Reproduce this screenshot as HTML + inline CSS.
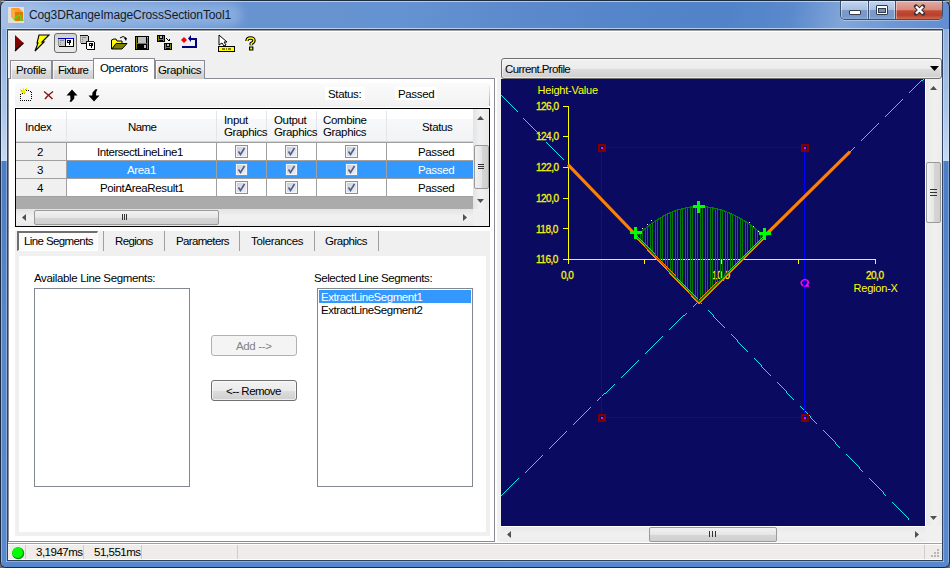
<!DOCTYPE html>
<html><head><meta charset="utf-8">
<style>
*{margin:0;padding:0;box-sizing:border-box}
html,body{width:950px;height:568px;overflow:hidden;background:#6a6a6a}
body{position:relative;font-family:"Liberation Sans",sans-serif;font-size:11px;color:#000}
.a{position:absolute}
.t{position:absolute;white-space:nowrap;line-height:1;font-size:11.5px;letter-spacing:-0.35px}
svg{position:absolute;overflow:visible}
</style></head><body>
<!-- ===== window frame ===== -->
<div class="a" style="left:0;top:0;width:950px;height:568px;border-radius:7px 7px 6px 6px;background:#1d2b3f"></div>
<div class="a" style="left:1px;top:1px;width:948px;height:566px;border-radius:6px 6px 5px 5px;
 background:linear-gradient(100deg,#a9c3e8 0px,#88abdd 50px,#77a0d9 150px,#6893d1 240px,#6592d0 400px,#5b89cc 520px,#5384c9 650px,#5283c8 720px,#5a89cc 780px,#82a6d9 832px,#6f98d4 880px,#5f8bcf 950px)"></div>
<div class="a" style="left:1px;top:1px;width:948px;height:1px;border-radius:6px 6px 0 0;background:rgba(255,255,255,.55)"></div>
<div class="a" style="left:7px;top:28px;width:936px;height:1px;background:rgba(220,235,255,.7)"></div>
<!-- side frames -->
<div class="a" style="left:1px;top:29px;width:6px;height:132px;background:linear-gradient(#8fb1df,#a9c5ea 60%,#c6daf3)"></div>
<div class="a" style="left:943px;top:29px;width:6px;height:132px;background:linear-gradient(#8fb1df,#a9c5ea 60%,#c6daf3)"></div>
<div class="a" style="left:1px;top:161px;width:6px;height:400px;background:linear-gradient(#4c7dc5,#5686cb 40%,#5a88cc)"></div>
<div class="a" style="left:943px;top:161px;width:6px;height:400px;background:linear-gradient(#4c7dc5,#5686cb 40%,#5a88cc)"></div>
<div class="a" style="left:1px;top:561px;width:948px;height:6px;border-radius:0 0 5px 5px;background:linear-gradient(#5c8acd,#5586cb)"></div>
<div class="a" style="left:1px;top:29px;width:1px;height:533px;background:rgba(255,255,255,.35)"></div>
<div class="a" style="left:948px;top:29px;width:1px;height:533px;background:rgba(255,255,255,.3)"></div>
<div class="a" style="left:6px;top:29px;width:1px;height:533px;background:rgba(255,255,255,.3)"></div>
<div class="a" style="left:943px;top:29px;width:1px;height:533px;background:rgba(255,255,255,.3)"></div>
<div class="a" style="left:6px;top:561px;width:938px;height:1px;background:rgba(255,255,255,.3)"></div>
<!-- title glow -->
<div class="a" style="left:22px;top:4px;width:220px;height:22px;border-radius:11px;background:rgba(190,215,245,0.35);filter:blur(4px)"></div>
<!-- title icon -->
<div class="a" style="left:8px;top:7px;width:16px;height:16px;background:#e4e0da"></div>
<svg style="left:8px;top:7px" width="16" height="16" viewBox="0 0 16 16">
  <polygon points="3,1 11,1 15,5 7,5" fill="#ff9a28"/>
  <polygon points="3,1 7,5 7,14 3,10" fill="#ffaa40"/>
  <polygon points="7,5 15,5 15,14 7,14" fill="#e47800"/>
  <polyline points="6,13 10,8.5 13,8.5 13,13 15.5,13" fill="none" stroke="#20f020" stroke-width="1.3"/>
</svg>
<div class="t" style="left:29px;top:9px;font-size:12px;letter-spacing:-0.13px;color:#141a2a">Cog3DRangeImageCrossSectionTool1</div>
<!-- caption buttons -->
<div class="a" style="left:840px;top:1px;width:103px;height:19px;border:1px solid #3b4f70;border-top:none;border-radius:0 0 5px 5px;overflow:hidden;box-shadow:0 1px 0 rgba(255,255,255,.35)">
  <div class="a" style="left:0;top:0;width:28px;height:19px;border-right:1px solid #3b4f70;background:linear-gradient(#c4d5ee 0,#a9c0e2 45%,#7d9bc8 50%,#7898c8 80%,#8fb0dc 100%);box-shadow:inset 0 0 0 1px rgba(255,255,255,0.45)"></div>
  <div class="a" style="left:28px;top:0;width:27px;height:19px;border-right:1px solid #3b4f70;background:linear-gradient(#c4d5ee 0,#a9c0e2 45%,#7d9bc8 50%,#7898c8 80%,#8fb0dc 100%);box-shadow:inset 0 0 0 1px rgba(255,255,255,0.45)"></div>
  <div class="a" style="left:55px;top:0;width:47px;height:19px;background:linear-gradient(#e3aba3 0,#d78b80 45%,#c54a32 52%,#b8402a 75%,#d8765a 100%);box-shadow:inset 0 0 0 1px rgba(255,255,255,0.4)"></div>
</div>
<div class="a" style="left:849px;top:10px;width:12px;height:5px;background:#fff;border:1px solid #333c4c;border-radius:1px"></div>
<div class="a" style="left:876px;top:5px;width:12px;height:10px;border:1px solid #333c4c;border-radius:1px;background:#fff"></div>
<div class="a" style="left:878px;top:8px;width:8px;height:5px;background:#6f8fc0;border:1px solid #333c4c"></div>
<svg style="left:913px;top:4px" width="13" height="12" viewBox="0 0 13 12">
  <path d="M3,2.5 L10,9.5 M10,2.5 L3,9.5" stroke="#3a3030" stroke-width="4.4" stroke-linecap="round"/>
  <path d="M3,2.5 L10,9.5 M10,2.5 L3,9.5" stroke="#fff" stroke-width="2.4" stroke-linecap="butt"/>
</svg>

<!-- ===== client ===== -->
<div class="a" style="left:7px;top:29px;width:936px;height:532px;background:#f0f0f0;border:1px solid #2f4262"></div>
<div class="a" style="left:8px;top:30px;width:934px;height:1px;background:#a0a0a0"></div>
<div class="a" style="left:8px;top:31px;width:934px;height:1px;background:#fff"></div>

<!-- toolbar icons -->
<svg style="left:14px;top:35px" width="11" height="17" viewBox="0 0 11 17">
  <polygon points="1,0 9.5,8 1,16" fill="#800000"/>
  <path d="M9.5,8 L1,16" stroke="#000" stroke-width="1.2"/>
</svg>
<svg style="left:34px;top:35px" width="16" height="17" viewBox="0 0 16 17">
  <polygon points="5,0 15,0 8,7 10,7 1,16 4,8 3,8" fill="#ffff00" stroke="#000" stroke-width="1.1" stroke-linejoin="miter"/>
</svg>
<div class="a" style="left:54px;top:33px;width:23px;height:20px;border:1px solid #6c6c6c;border-radius:3px;background:linear-gradient(#cfcfcf,#dcdcdc 40%,#e4e4e4 70%,#e8e8e8)"></div>
<svg style="left:58px;top:38px" width="16" height="9" viewBox="0 0 16 9" shape-rendering="crispEdges">
  <rect x="0" y="0" width="7" height="1" fill="#0000a8"/>
  <rect x="0" y="1" width="7" height="7" fill="#c8c8c8"/>
  <rect x="0" y="1" width="1" height="7" fill="#909090"/>
  <rect x="2" y="2" width="4" height="1" fill="#8a8a8a"/><rect x="2" y="4" width="1" height="1" fill="#8a8a8a"/><rect x="2" y="6" width="1" height="1" fill="#8a8a8a"/>
  <rect x="7" y="0" width="1" height="9" fill="#000"/>
  <rect x="8" y="0" width="7" height="1" fill="#0000ff"/>
  <rect x="8" y="1" width="7" height="7" fill="#fff"/>
  <rect x="15" y="0" width="1" height="9" fill="#000"/>
  <rect x="1" y="8" width="15" height="1" fill="#000"/>
  <rect x="9" y="2" width="4" height="3" fill="#000"/><rect x="10" y="3" width="1" height="1" fill="#fff"/><rect x="11" y="5" width="1" height="2" fill="#000"/>
</svg>
<svg style="left:80px;top:35px" width="16" height="16" viewBox="0 0 16 16" shape-rendering="crispEdges">
  <rect x="0" y="0" width="8" height="1" fill="#0000a8"/>
  <rect x="0" y="1" width="8" height="7" fill="#c8c8c8"/>
  <rect x="0" y="1" width="1" height="7" fill="#909090"/>
  <rect x="2" y="2" width="4" height="1" fill="#8a8a8a"/><rect x="2" y="4" width="1" height="1" fill="#8a8a8a"/><rect x="2" y="6" width="1" height="1" fill="#8a8a8a"/>
  <rect x="8" y="1" width="1" height="8" fill="#000"/><rect x="1" y="8" width="6" height="1" fill="#000"/>
  <rect x="6" y="6" width="8" height="1" fill="#0000ff"/>
  <rect x="6" y="7" width="8" height="7" fill="#fff"/>
  <rect x="6" y="7" width="1" height="7" fill="#000"/>
  <rect x="14" y="7" width="1" height="8" fill="#000"/><rect x="7" y="14" width="8" height="1" fill="#000"/>
  <rect x="9" y="8" width="4" height="3" fill="#000"/><rect x="10" y="9" width="1" height="1" fill="#fff"/><rect x="11" y="11" width="1" height="2" fill="#000"/>
</svg>
<svg style="left:111px;top:35px" width="17" height="15" viewBox="0 0 17 15">
  <path d="M9,3 Q12,0 15,3" fill="none" stroke="#000" stroke-width="1"/>
  <path d="M13,3 L16,3 L15,6 Z" fill="#000"/>
  <polygon points="0.5,5 3,4 5,4 6,6 11,6 11,9 5,9 1,14 0.5,14" fill="#ffff00" stroke="#000" stroke-width="1"/>
  <polygon points="1,14 5,8.5 16,8.5 11,14" fill="#808000" stroke="#000" stroke-width="1"/>
</svg>
<svg style="left:135px;top:36px" width="15" height="14" viewBox="0 0 15 14" shape-rendering="crispEdges">
  <rect x="0" y="0" width="14" height="14" fill="#000"/>
  <rect x="1" y="1" width="1" height="12" fill="#808000"/><rect x="12" y="1" width="1" height="12" fill="#808000"/>
  <rect x="3" y="1" width="8" height="6" fill="#c0c0c0"/>
  <rect x="1" y="7" width="12" height="1" fill="#808000"/>
  <rect x="9" y="9" width="2" height="3" fill="#c0c0c0"/>
  <rect x="12" y="1" width="1" height="1" fill="#c0c0c0"/>
</svg>
<svg style="left:157px;top:35px" width="17" height="16" viewBox="0 0 17 16" shape-rendering="crispEdges">
  <rect x="0" y="0" width="8" height="7" fill="#000"/>
  <rect x="1" y="1" width="1" height="5" fill="#808000"/><rect x="6" y="1" width="1" height="5" fill="#808000"/><rect x="1" y="4" width="6" height="1" fill="#808000"/>
  <rect x="3" y="1" width="2" height="2" fill="#c0c0c0"/>
  <rect x="7" y="8" width="8" height="7" fill="#000"/>
  <rect x="8" y="9" width="1" height="5" fill="#808000"/><rect x="13" y="9" width="1" height="5" fill="#808000"/><rect x="8" y="12" width="6" height="1" fill="#808000"/>
  <rect x="10" y="9" width="2" height="2" fill="#c0c0c0"/>
  <rect x="9" y="3" width="1" height="1" fill="#000"/><rect x="10" y="4" width="1" height="1" fill="#000"/><rect x="11" y="5" width="2" height="1" fill="#000"/><rect x="12" y="4" width="1" height="1" fill="#000"/>
</svg>
<svg style="left:181px;top:35px" width="18" height="14" viewBox="0 0 18 14">
  <polygon points="3,2 6,5 3,8 0,5" fill="#ff0000"/>
  <polygon points="10,0 10,7 7,3.5" fill="#000080"/>
  <rect x="10" y="3" width="6" height="2" fill="#000080"/>
  <rect x="14" y="3" width="2" height="10" fill="#000080"/>
  <rect x="1" y="11" width="15" height="2" fill="#000080"/>
</svg>
<svg style="left:218px;top:35px" width="19" height="17" viewBox="0 0 19 17">
  <polygon points="1,0 1,10 4,8 6,11 8,10 6,7 9,7" fill="#fff" stroke="#000" stroke-width="1"/>
  <rect x="0.5" y="11.5" width="16" height="5" fill="#ffff00" stroke="#000" stroke-width="1"/>
  <rect x="4" y="13.5" width="3" height="1" fill="#000"/><rect x="8" y="13.5" width="1" height="1" fill="#000"/><rect x="10" y="13.5" width="3" height="1" fill="#000"/>
</svg>
<svg style="left:244px;top:36px" width="13" height="15" viewBox="0 0 13 15">
  <path d="M3,5 Q3,2 6.5,2 Q10,2 10,4.5 Q10,6.2 7.2,7.6 L7.2,9.2" fill="none" stroke="#000" stroke-width="3.4" stroke-linejoin="round"/>
  <path d="M3,5 Q3,2 6.5,2 Q10,2 10,4.5 Q10,6.2 7.2,7.6 L7.2,9.2" fill="none" stroke="#ffff00" stroke-width="1.3"/>
  <rect x="5" y="10.5" width="4.4" height="4" fill="#000"/><rect x="6.2" y="11.5" width="2" height="2" fill="#ffff00"/>
</svg>


<!-- ===== main tabs ===== -->
<div class="a" style="left:8px;top:78px;width:487px;height:464px;background:#fff;border:1px solid #898c95"></div>
<div class="a" style="left:10px;top:60px;width:42px;height:19px;border:1px solid #898c95;border-bottom:none;background:linear-gradient(#f2f2f2 0,#ebebeb 50%,#dddddd 51%,#cfcfcf 100%);box-shadow:inset 1px 1px 0 rgba(255,255,255,.7)"></div>
<div class="a" style="left:52px;top:60px;width:42px;height:19px;border:1px solid #898c95;border-bottom:none;background:linear-gradient(#f2f2f2 0,#ebebeb 50%,#dddddd 51%,#cfcfcf 100%);box-shadow:inset 1px 1px 0 rgba(255,255,255,.7)"></div>
<div class="a" style="left:155px;top:60px;width:50px;height:19px;border:1px solid #898c95;border-bottom:none;background:linear-gradient(#f2f2f2 0,#ebebeb 50%,#dddddd 51%,#cfcfcf 100%);box-shadow:inset 1px 1px 0 rgba(255,255,255,.7)"></div>
<div class="a" style="left:93px;top:58px;width:62px;height:21px;border:1px solid #898c95;border-bottom:none;background:#fff"></div>
<div class="t" style="left:16px;top:65px">Profile</div>
<div class="t" style="left:58px;top:65px;letter-spacing:-0.7px">Fixture</div>
<div class="t" style="left:100px;top:63px">Operators</div>
<div class="t" style="left:158px;top:65px">Graphics</div>


<!-- ===== left tab page ===== -->
<svg style="left:0;top:0" width="0" height="0"><defs><linearGradient id="cg" x1="0" y1="0" x2="1" y2="1"><stop offset="0" stop-color="#cbcfd5"/><stop offset="1" stop-color="#f0f0f0"/></linearGradient></defs></svg>
<!-- grid toolbar panel -->
<div class="a" style="left:15px;top:83px;width:475px;height:24px;border-radius:2px;background:linear-gradient(#fbfbfb,#f1f1f1)"></div>
<div class="a" style="left:489px;top:85px;width:1px;height:21px;background:linear-gradient(#f0f0f0,#a8a8a8)"></div>
<svg style="left:19px;top:87px" width="15" height="15" viewBox="0 0 15 15" shape-rendering="crispEdges">
  <g fill="#000">
  <rect x="1" y="13" width="1" height="1"/><rect x="3" y="13" width="1" height="1"/><rect x="5" y="13" width="1" height="1"/><rect x="7" y="13" width="1" height="1"/><rect x="9" y="13" width="1" height="1"/><rect x="11" y="13" width="1" height="1"/>
  <rect x="12" y="5" width="1" height="1"/><rect x="12" y="7" width="1" height="1"/><rect x="12" y="9" width="1" height="1"/><rect x="12" y="11" width="1" height="1"/>
  <rect x="1" y="7" width="1" height="1"/><rect x="1" y="9" width="1" height="1"/><rect x="1" y="11" width="1" height="1"/>
  <rect x="7" y="3" width="1" height="1"/><rect x="9" y="3" width="1" height="1"/><rect x="11" y="4" width="1" height="1"/>
  <rect x="3" y="6" width="1" height="1"/><rect x="6" y="2" width="1" height="1"/></g>
  <g fill="#f0f000"><rect x="3" y="3" width="3" height="3"/><rect x="1" y="2" width="1" height="1"/><rect x="7" y="1" width="1" height="1"/><rect x="2" y="6" width="1" height="1"/><rect x="6" y="5" width="1" height="1"/><rect x="4" y="1" width="1" height="2"/><rect x="1" y="4" width="2" height="1"/></g>
  <g fill="#a0a070"><rect x="2" y="3" width="1" height="1"/><rect x="6" y="2" width="1" height="1"/><rect x="5" y="6" width="1" height="1"/></g>
</svg>
<svg style="left:43px;top:90px" width="11" height="10" viewBox="0 0 11 10">
  <path d="M1,1.5 Q5,4.5 9.5,9 M10,1.5 Q5,5 2,9" fill="none" stroke="#8c1414" stroke-width="1.5"/>
</svg>
<svg style="left:66px;top:89px" width="13" height="13" viewBox="0 0 13 13">
  <polygon points="0.5,6.5 6,0.5 11.5,6.5 8.3,6.5 8.3,9.5 5.5,12.8 3.5,12.8 4.5,10.5 4.2,6.5" fill="#000"/>
</svg>
<svg style="left:88px;top:89px" width="13" height="13" viewBox="0 0 13 13">
  <polygon points="0.5,6.5 6,12.5 11.5,6.5 8,6.5 8.2,3 9.5,0.3 7.5,0.3 4.5,3.5 4.2,6.5" fill="#000"/>
</svg>
<div class="a" style="left:325px;top:87px;width:40px;height:13px;background:#fff"></div>
<div class="t" style="left:328px;top:89px">Status:</div>
<div class="a" style="left:395px;top:87px;width:42px;height:13px;background:#fff"></div>
<div class="t" style="left:398px;top:89px">Passed</div>

<!-- data grid -->
<div class="a" style="left:15px;top:108px;width:475px;height:119px;border:1px solid #000;background:#ababab"></div>
<!-- header -->
<div class="a" style="left:16px;top:109px;width:457px;height:32px;background:linear-gradient(#fff 0,#fff 30%,#f7f8fa 31%,#f2f3f5 100%)"></div>
<div class="a" style="left:16px;top:141px;width:457px;height:1px;background:#d5d5d5"></div>
<div class="a" style="left:16px;top:142px;width:457px;height:1px;background:#a0a0a0"></div>
<div class="a" style="left:66px;top:111px;width:1px;height:30px;background:#e4e5e8"></div>
<div class="a" style="left:216px;top:111px;width:1px;height:30px;background:#e4e5e8"></div>
<div class="a" style="left:266px;top:111px;width:1px;height:30px;background:#e4e5e8"></div>
<div class="a" style="left:316px;top:111px;width:1px;height:30px;background:#e4e5e8"></div>
<div class="a" style="left:386px;top:111px;width:1px;height:30px;background:#e4e5e8"></div>
<div class="t" style="left:25px;top:122px">Index</div>
<div class="t" style="left:128px;top:122px;letter-spacing:-0.6px">Name</div>
<div class="t" style="left:224px;top:115px">Input</div>
<div class="t" style="left:224px;top:127px">Graphics</div>
<div class="t" style="left:274px;top:115px">Output</div>
<div class="t" style="left:274px;top:127px">Graphics</div>
<div class="t" style="left:323px;top:115px">Combine</div>
<div class="t" style="left:323px;top:127px">Graphics</div>
<div class="t" style="left:422px;top:122px">Status</div>
<!-- rows -->
<div class="a" style="left:16px;top:143px;width:457px;height:54px;background:#fff"></div>
<div class="a" style="left:16px;top:143px;width:50px;height:54px;background:#f0f0f0"></div>
<div class="a" style="left:67px;top:161px;width:406px;height:17px;background:#3399ff"></div>
<div class="a" style="left:16px;top:160px;width:457px;height:1px;background:#a0a0a0"></div>
<div class="a" style="left:16px;top:178px;width:457px;height:1px;background:#a0a0a0"></div>
<div class="a" style="left:16px;top:196px;width:457px;height:1px;background:#a0a0a0"></div>
<div class="a" style="left:66px;top:143px;width:1px;height:54px;background:#a0a0a0"></div>
<div class="a" style="left:216px;top:143px;width:1px;height:54px;background:#a0a0a0"></div>
<div class="a" style="left:266px;top:143px;width:1px;height:54px;background:#a0a0a0"></div>
<div class="a" style="left:316px;top:143px;width:1px;height:54px;background:#a0a0a0"></div>
<div class="a" style="left:386px;top:143px;width:1px;height:54px;background:#a0a0a0"></div>
<div class="t" style="left:37px;top:147px">2</div>
<div class="t" style="left:37px;top:165px">3</div>
<div class="t" style="left:37px;top:183px">4</div>
<div class="t" style="left:97px;top:147px;letter-spacing:-0.45px">IntersectLineLine1</div>
<div class="t" style="left:127px;top:165px;color:#fff">Area1</div>
<div class="t" style="left:100px;top:183px">PointAreaResult1</div>
<div class="t" style="left:418px;top:147px">Passed</div>
<div class="t" style="left:418px;top:165px;color:#fff">Passed</div>
<div class="t" style="left:418px;top:183px">Passed</div>
<svg style="left:235px;top:145px" width="13" height="13" viewBox="0 0 13 13"><rect x="0.5" y="0.5" width="12" height="12" fill="#f4f4f4" stroke="#8f8f8f"/><rect x="2" y="2" width="9" height="9" fill="url(#cg)"/><path d="M3.5,6.5 L5.5,9.5 L9.5,3" fill="none" stroke="#4a5f97" stroke-width="1.6"/></svg><svg style="left:285px;top:145px" width="13" height="13" viewBox="0 0 13 13"><rect x="0.5" y="0.5" width="12" height="12" fill="#f4f4f4" stroke="#8f8f8f"/><rect x="2" y="2" width="9" height="9" fill="url(#cg)"/><path d="M3.5,6.5 L5.5,9.5 L9.5,3" fill="none" stroke="#4a5f97" stroke-width="1.6"/></svg><svg style="left:345px;top:145px" width="13" height="13" viewBox="0 0 13 13"><rect x="0.5" y="0.5" width="12" height="12" fill="#f4f4f4" stroke="#8f8f8f"/><rect x="2" y="2" width="9" height="9" fill="url(#cg)"/><path d="M3.5,6.5 L5.5,9.5 L9.5,3" fill="none" stroke="#4a5f97" stroke-width="1.6"/></svg><svg style="left:235px;top:163px" width="13" height="13" viewBox="0 0 13 13"><rect x="0.5" y="0.5" width="12" height="12" fill="#f4f4f4" stroke="#8f8f8f"/><rect x="2" y="2" width="9" height="9" fill="url(#cg)"/><path d="M3.5,6.5 L5.5,9.5 L9.5,3" fill="none" stroke="#4a5f97" stroke-width="1.6"/></svg><svg style="left:285px;top:163px" width="13" height="13" viewBox="0 0 13 13"><rect x="0.5" y="0.5" width="12" height="12" fill="#f4f4f4" stroke="#8f8f8f"/><rect x="2" y="2" width="9" height="9" fill="url(#cg)"/><path d="M3.5,6.5 L5.5,9.5 L9.5,3" fill="none" stroke="#4a5f97" stroke-width="1.6"/></svg><svg style="left:345px;top:163px" width="13" height="13" viewBox="0 0 13 13"><rect x="0.5" y="0.5" width="12" height="12" fill="#f4f4f4" stroke="#8f8f8f"/><rect x="2" y="2" width="9" height="9" fill="url(#cg)"/><path d="M3.5,6.5 L5.5,9.5 L9.5,3" fill="none" stroke="#4a5f97" stroke-width="1.6"/></svg><svg style="left:235px;top:181px" width="13" height="13" viewBox="0 0 13 13"><rect x="0.5" y="0.5" width="12" height="12" fill="#f4f4f4" stroke="#8f8f8f"/><rect x="2" y="2" width="9" height="9" fill="url(#cg)"/><path d="M3.5,6.5 L5.5,9.5 L9.5,3" fill="none" stroke="#4a5f97" stroke-width="1.6"/></svg><svg style="left:285px;top:181px" width="13" height="13" viewBox="0 0 13 13"><rect x="0.5" y="0.5" width="12" height="12" fill="#f4f4f4" stroke="#8f8f8f"/><rect x="2" y="2" width="9" height="9" fill="url(#cg)"/><path d="M3.5,6.5 L5.5,9.5 L9.5,3" fill="none" stroke="#4a5f97" stroke-width="1.6"/></svg><svg style="left:345px;top:181px" width="13" height="13" viewBox="0 0 13 13"><rect x="0.5" y="0.5" width="12" height="12" fill="#f4f4f4" stroke="#8f8f8f"/><rect x="2" y="2" width="9" height="9" fill="url(#cg)"/><path d="M3.5,6.5 L5.5,9.5 L9.5,3" fill="none" stroke="#4a5f97" stroke-width="1.6"/></svg>
<!-- grid v-scrollbar -->
<div class="a" style="left:473px;top:109px;width:16px;height:100px;background:linear-gradient(90deg,#e3e3e3,#f0f0f0 40%,#f0f0f0 60%,#e8e8e8)"></div>
<svg style="left:477px;top:116px" width="7" height="4" viewBox="0 0 7 4"><polygon points="0,4 3.5,0 7,4" fill="#505050"/></svg>
<svg style="left:477px;top:199px" width="7" height="4" viewBox="0 0 7 4"><polygon points="0,0 3.5,4 7,0" fill="#505050"/></svg>
<div class="a" style="left:474px;top:145px;width:15px;height:44px;border:1px solid #9a9a9a;border-radius:2px;background:linear-gradient(90deg,#f2f2f2,#e6e6e6 50%,#d6d6d6 51%,#cfcfcf)"></div>
<div class="a" style="left:478px;top:164px;width:6px;height:1px;background:#333"></div>
<div class="a" style="left:478px;top:166px;width:6px;height:1px;background:#333"></div>
<div class="a" style="left:478px;top:168px;width:6px;height:1px;background:#333"></div>
<!-- grid h-scrollbar -->
<div class="a" style="left:16px;top:209px;width:457px;height:17px;background:linear-gradient(#e3e3e3,#f0f0f0 40%,#f0f0f0 60%,#e8e8e8)"></div>
<svg style="left:22px;top:214px" width="4" height="7" viewBox="0 0 4 7"><polygon points="4,0 0,3.5 4,7" fill="#505050"/></svg>
<svg style="left:463px;top:214px" width="4" height="7" viewBox="0 0 4 7"><polygon points="0,0 4,3.5 0,7" fill="#505050"/></svg>
<div class="a" style="left:34px;top:210px;width:185px;height:15px;border:1px solid #9a9a9a;border-radius:2px;background:linear-gradient(#f2f2f2,#e6e6e6 50%,#d6d6d6 51%,#cfcfcf)"></div>
<div class="a" style="left:122px;top:214px;width:1px;height:6px;background:#333"></div>
<div class="a" style="left:124px;top:214px;width:1px;height:6px;background:#333"></div>
<div class="a" style="left:126px;top:214px;width:1px;height:6px;background:#333"></div>
<div class="a" style="left:473px;top:209px;width:16px;height:17px;background:#f0f0f0"></div>

<!-- inner tab control -->
<div class="a" style="left:15px;top:231px;width:475px;height:305px;background:#f0f0f0"></div>
<div class="a" style="left:19px;top:256px;width:467px;height:276px;background:#fff"></div>
<div class="a" style="left:17px;top:231px;width:81px;height:20px;border-top:2px solid #6f6f6f;border-left:2px solid #6f6f6f;border-right:1px solid #fff;border-bottom:1px solid #fff;background:#fbfbfb"></div>
<div class="a" style="left:103px;top:231px;width:1px;height:20px;background:#a0a0a0"></div>
<div class="a" style="left:164px;top:231px;width:1px;height:20px;background:#a0a0a0"></div>
<div class="a" style="left:239px;top:231px;width:1px;height:20px;background:#a0a0a0"></div>
<div class="a" style="left:314px;top:231px;width:1px;height:20px;background:#a0a0a0"></div>
<div class="a" style="left:378px;top:231px;width:1px;height:20px;background:#a0a0a0"></div>
<div class="t" style="left:24px;top:236px;letter-spacing:-0.6px">Line Segments</div>
<div class="t" style="left:115px;top:236px;letter-spacing:-0.65px">Regions</div>
<div class="t" style="left:176px;top:236px;letter-spacing:-0.65px">Parameters</div>
<div class="t" style="left:251px;top:236px">Tolerances</div>
<div class="t" style="left:325px;top:236px;letter-spacing:-0.5px">Graphics</div>
<div class="t" style="left:34px;top:273px">Available Line Segments:</div>
<div class="t" style="left:314px;top:273px;letter-spacing:-0.42px">Selected Line Segments:</div>
<div class="a" style="left:34px;top:288px;width:156px;height:199px;border:1px solid #828790;background:#fff"></div>
<div class="a" style="left:317px;top:288px;width:156px;height:199px;border:1px solid #828790;background:#fff"></div>
<div class="a" style="left:319px;top:290px;width:152px;height:13px;background:#3399ff"></div>
<div class="t" style="left:321px;top:292px;color:#fff;letter-spacing:-0.45px">ExtractLineSegment1</div>
<div class="t" style="left:321px;top:305px;letter-spacing:-0.45px">ExtractLineSegment2</div>
<div class="a" style="left:211px;top:335px;width:86px;height:21px;border:1px solid #adb2b5;border-radius:3px;background:#f4f4f4"></div>
<div class="t" style="left:236px;top:341px;color:#838383">Add --&gt;</div>
<div class="a" style="left:211px;top:380px;width:86px;height:21px;border:1px solid #707070;border-radius:3px;background:linear-gradient(#f2f2f2 0,#ebebeb 50%,#dddddd 51%,#cfcfcf 100%);box-shadow:inset 0 0 0 1px rgba(255,255,255,.6)"></div>
<div class="t" style="left:226px;top:386px;letter-spacing:-0.55px">&lt;-- Remove</div>


<!-- ===== right pane ===== -->
<div class="a" style="left:495px;top:78px;width:2px;height:464px;background:#fff"></div>
<!-- dropdown -->
<div class="a" style="left:501px;top:58px;width:441px;height:21px;border:1px solid #707070;border-radius:3px;background:linear-gradient(#f2f2f2 0,#ebebeb 50%,#dddddd 51%,#cfcfcf 100%);box-shadow:inset 0 0 0 1px rgba(255,255,255,.55)"></div>
<div class="t" style="left:505px;top:64px;letter-spacing:-0.6px">Current.Profile</div>
<svg style="left:930px;top:66px" width="9" height="5" viewBox="0 0 9 5"><polygon points="0,0 9,0 4.5,5" fill="#000"/></svg>
<!-- plot -->
<svg style="left:501px;top:79px;overflow:hidden" width="424" height="447" viewBox="501 79 424 447">
  <rect x="501" y="79" width="424" height="447" fill="#0a0a60"/>
  <path d="M501 95h1v1h-1zM502 96h1v1h-1zM503 97h1v1h-1zM504 98h1v1h-1zM505 99h1v1h-1zM506 100h1v1h-1zM507 101h1v1h-1zM508 102h1v1h-1zM509 103h1v1h-1zM510 104h1v1h-1zM511 105h1v1h-1zM512 106h1v1h-1zM513 107h1v1h-1zM514 108h1v1h-1zM515 109h1v1h-1zM516 110h1v1h-1zM517 111h1v1h-1zM523 118h1v1h-1zM524 119h1v1h-1zM525 120h1v1h-1zM526 121h1v1h-1zM527 122h1v1h-1zM528 123h1v1h-1zM529 124h1v1h-1zM530 125h1v1h-1zM531 126h1v1h-1zM532 127h1v1h-1zM533 128h1v1h-1zM534 129h1v1h-1zM535 130h1v1h-1zM536 131h1v1h-1zM537 132h1v1h-1zM538 133h1v1h-1zM539 134h1v1h-1zM540 135h1v1h-1zM546 142h1v1h-1zM547 143h1v1h-1zM548 144h1v1h-1zM549 145h1v1h-1zM550 146h1v1h-1zM551 147h1v1h-1zM552 148h1v1h-1zM553 149h1v1h-1zM554 150h1v1h-1zM555 151h1v1h-1zM556 152h1v1h-1zM557 153h1v1h-1zM558 154h1v1h-1zM559 155h1v1h-1zM560 156h1v1h-1zM561 157h1v1h-1zM562 158h1v1h-1zM563 159h1v1h-1zM569 166h1v1h-1zM570 167h1v1h-1zM571 168h1v1h-1zM572 169h1v1h-1zM573 170h1v1h-1zM574 171h1v1h-1zM575 172h1v1h-1zM576 173h1v1h-1zM577 174h1v1h-1zM578 175h1v1h-1zM579 176h1v1h-1zM580 177h1v1h-1zM581 178h1v1h-1zM582 179h1v1h-1zM583 180h1v1h-1zM584 181h1v1h-1zM585 182h1v1h-1zM586 183h1v1h-1zM592 190h1v1h-1zM593 191h1v1h-1zM594 192h1v1h-1zM595 193h1v1h-1zM596 194h1v1h-1zM597 195h1v1h-1zM598 196h1v1h-1zM599 197h1v1h-1zM600 198h1v1h-1zM601 199h1v1h-1zM602 200h1v1h-1zM603 201h1v1h-1zM604 202h1v1h-1zM605 203h1v1h-1zM606 204h1v1h-1zM607 205h1v1h-1zM608 206h1v1h-1zM609 207h1v1h-1zM615 214h1v1h-1zM616 215h1v1h-1zM617 216h1v1h-1zM618 217h1v1h-1zM619 218h1v1h-1zM620 219h1v1h-1zM621 220h1v1h-1zM622 221h1v1h-1zM623 222h1v1h-1zM624 223h1v1h-1zM625 224h1v1h-1zM626 225h1v1h-1zM627 226h1v1h-1zM628 227h1v1h-1zM629 228h1v1h-1zM630 229h1v1h-1zM631 230h1v1h-1zM632 231h1v1h-1zM639 238h1v1h-1zM640 239h1v1h-1zM640 240h1v1h-1zM641 241h1v1h-1zM642 242h1v1h-1zM643 243h1v1h-1zM644 244h1v1h-1zM645 245h1v1h-1zM646 246h1v1h-1zM647 247h1v1h-1zM648 248h1v1h-1zM649 249h1v1h-1zM650 250h1v1h-1zM651 251h1v1h-1zM652 252h1v1h-1zM653 253h1v1h-1zM654 254h1v1h-1zM655 255h1v1h-1zM662 262h1v1h-1zM663 263h1v1h-1zM664 264h1v1h-1zM664 265h1v1h-1zM665 266h1v1h-1zM666 267h1v1h-1zM667 268h1v1h-1zM668 269h1v1h-1zM669 270h1v1h-1zM670 271h1v1h-1zM671 272h1v1h-1zM672 273h1v1h-1zM673 274h1v1h-1zM674 275h1v1h-1zM675 276h1v1h-1zM676 277h1v1h-1zM677 278h1v1h-1zM678 279h1v1h-1zM685 286h1v1h-1zM686 287h1v1h-1zM687 288h1v1h-1zM688 289h1v1h-1zM688 290h1v1h-1zM689 291h1v1h-1zM690 292h1v1h-1zM691 293h1v1h-1zM692 294h1v1h-1zM693 295h1v1h-1zM694 296h1v1h-1zM695 297h1v1h-1zM696 298h1v1h-1zM697 299h1v1h-1zM698 300h1v1h-1zM699 301h1v1h-1zM700 302h1v1h-1zM701 303h1v1h-1zM708 310h1v1h-1zM709 311h1v1h-1zM710 312h1v1h-1zM711 313h1v1h-1zM712 314h1v1h-1zM713 315h1v1h-1zM713 316h1v1h-1zM714 317h1v1h-1zM715 318h1v1h-1zM716 319h1v1h-1zM717 320h1v1h-1zM718 321h1v1h-1zM719 322h1v1h-1zM720 323h1v1h-1zM721 324h1v1h-1zM722 325h1v1h-1zM723 326h1v1h-1zM724 327h1v1h-1zM731 334h1v1h-1zM732 335h1v1h-1zM733 336h1v1h-1zM734 337h1v1h-1zM735 338h1v1h-1zM736 339h1v1h-1zM737 340h1v1h-1zM737 341h1v1h-1zM738 342h1v1h-1zM739 343h1v1h-1zM740 344h1v1h-1zM741 345h1v1h-1zM742 346h1v1h-1zM743 347h1v1h-1zM744 348h1v1h-1zM745 349h1v1h-1zM746 350h1v1h-1zM747 351h1v1h-1zM754 358h1v1h-1zM755 359h1v1h-1zM756 360h1v1h-1zM757 361h1v1h-1zM758 362h1v1h-1zM759 363h1v1h-1zM760 364h1v1h-1zM761 365h1v1h-1zM761 366h1v1h-1zM762 367h1v1h-1zM763 368h1v1h-1zM764 369h1v1h-1zM765 370h1v1h-1zM766 371h1v1h-1zM767 372h1v1h-1zM768 373h1v1h-1zM769 374h1v1h-1zM770 375h1v1h-1zM777 382h1v1h-1zM778 383h1v1h-1zM779 384h1v1h-1zM780 385h1v1h-1zM781 386h1v1h-1zM782 387h1v1h-1zM783 388h1v1h-1zM784 389h1v1h-1zM785 390h1v1h-1zM786 391h1v1h-1zM786 392h1v1h-1zM787 393h1v1h-1zM788 394h1v1h-1zM789 395h1v1h-1zM790 396h1v1h-1zM791 397h1v1h-1zM792 398h1v1h-1zM793 399h1v1h-1zM800 406h1v1h-1zM801 407h1v1h-1zM802 408h1v1h-1zM803 409h1v1h-1zM804 410h1v1h-1zM805 411h1v1h-1zM806 412h1v1h-1zM807 413h1v1h-1zM808 414h1v1h-1zM809 415h1v1h-1zM810 416h1v1h-1zM810 417h1v1h-1zM811 418h1v1h-1zM812 419h1v1h-1zM813 420h1v1h-1zM814 421h1v1h-1zM815 422h1v1h-1zM816 423h1v1h-1zM823 430h1v1h-1zM824 431h1v1h-1zM825 432h1v1h-1zM826 433h1v1h-1zM827 434h1v1h-1zM828 435h1v1h-1zM829 436h1v1h-1zM830 437h1v1h-1zM831 438h1v1h-1zM832 439h1v1h-1zM833 440h1v1h-1zM834 441h1v1h-1zM835 442h1v1h-1zM835 443h1v1h-1zM836 444h1v1h-1zM837 445h1v1h-1zM838 446h1v1h-1zM839 447h1v1h-1zM846 454h1v1h-1zM847 455h1v1h-1zM848 456h1v1h-1zM849 457h1v1h-1zM850 458h1v1h-1zM851 459h1v1h-1zM852 460h1v1h-1zM853 461h1v1h-1zM854 462h1v1h-1zM855 463h1v1h-1zM856 464h1v1h-1zM857 465h1v1h-1zM858 466h1v1h-1zM859 467h1v1h-1zM859 468h1v1h-1zM860 469h1v1h-1zM861 470h1v1h-1zM862 471h1v1h-1zM869 478h1v1h-1zM870 479h1v1h-1zM871 480h1v1h-1zM872 481h1v1h-1zM873 482h1v1h-1zM874 483h1v1h-1zM875 484h1v1h-1zM876 485h1v1h-1zM877 486h1v1h-1zM878 487h1v1h-1zM879 488h1v1h-1zM880 489h1v1h-1zM881 490h1v1h-1zM882 491h1v1h-1zM883 492h1v1h-1zM883 493h1v1h-1zM884 494h1v1h-1zM885 495h1v1h-1zM892 502h1v1h-1zM893 503h1v1h-1zM894 504h1v1h-1zM895 505h1v1h-1zM896 506h1v1h-1zM897 507h1v1h-1zM898 508h1v1h-1zM899 509h1v1h-1zM900 510h1v1h-1zM901 511h1v1h-1zM902 512h1v1h-1zM903 513h1v1h-1zM904 514h1v1h-1zM905 515h1v1h-1zM906 516h1v1h-1zM907 517h1v1h-1zM908 518h1v1h-1zM908 519h1v1h-1zM501 495h1v1h-1zM502 494h1v1h-1zM503 493h1v1h-1zM504 492h1v1h-1zM505 491h1v1h-1zM506 490h1v1h-1zM507 489h1v1h-1zM508 488h1v1h-1zM509 487h1v1h-1zM510 486h1v1h-1zM511 485h1v1h-1zM512 484h1v1h-1zM513 483h1v1h-1zM514 482h1v1h-1zM515 481h1v1h-1zM516 480h1v1h-1zM517 479h1v1h-1zM518 478h1v1h-1zM525 472h1v1h-1zM526 471h1v1h-1zM527 470h1v1h-1zM528 469h1v1h-1zM529 468h1v1h-1zM530 467h1v1h-1zM531 466h1v1h-1zM532 465h1v1h-1zM533 464h1v1h-1zM534 463h1v1h-1zM535 462h1v1h-1zM536 461h1v1h-1zM537 460h1v1h-1zM538 459h1v1h-1zM539 458h1v1h-1zM540 457h1v1h-1zM541 456h1v1h-1zM542 455h1v1h-1zM549 448h1v1h-1zM550 447h1v1h-1zM551 446h1v1h-1zM552 445h1v1h-1zM553 444h1v1h-1zM554 443h1v1h-1zM555 442h1v1h-1zM556 441h1v1h-1zM557 440h1v1h-1zM558 439h1v1h-1zM559 438h1v1h-1zM560 437h1v1h-1zM561 436h1v1h-1zM562 435h1v1h-1zM563 434h1v1h-1zM564 433h1v1h-1zM565 432h1v1h-1zM566 431h1v1h-1zM573 424h1v1h-1zM574 423h1v1h-1zM575 422h1v1h-1zM576 421h1v1h-1zM577 420h1v1h-1zM578 419h1v1h-1zM579 418h1v1h-1zM580 417h1v1h-1zM581 416h1v1h-1zM582 415h1v1h-1zM583 414h1v1h-1zM584 413h1v1h-1zM585 412h1v1h-1zM586 411h1v1h-1zM587 410h1v1h-1zM588 409h1v1h-1zM589 408h1v1h-1zM590 407h1v1h-1zM597 400h1v1h-1zM598 399h1v1h-1zM599 398h1v1h-1zM600 397h1v1h-1zM601 396h1v1h-1zM602 395h1v1h-1zM603 394h1v1h-1zM604 393h1v1h-1zM605 393h1v1h-1zM606 392h1v1h-1zM607 391h1v1h-1zM608 390h1v1h-1zM609 389h1v1h-1zM610 388h1v1h-1zM611 387h1v1h-1zM612 386h1v1h-1zM613 385h1v1h-1zM614 384h1v1h-1zM621 377h1v1h-1zM622 376h1v1h-1zM623 375h1v1h-1zM624 374h1v1h-1zM625 373h1v1h-1zM626 372h1v1h-1zM627 371h1v1h-1zM628 370h1v1h-1zM629 369h1v1h-1zM630 368h1v1h-1zM631 367h1v1h-1zM632 366h1v1h-1zM633 365h1v1h-1zM634 364h1v1h-1zM635 363h1v1h-1zM636 362h1v1h-1zM637 361h1v1h-1zM638 360h1v1h-1zM645 353h1v1h-1zM646 352h1v1h-1zM647 351h1v1h-1zM648 350h1v1h-1zM649 349h1v1h-1zM650 348h1v1h-1zM651 347h1v1h-1zM652 346h1v1h-1zM653 345h1v1h-1zM654 344h1v1h-1zM655 343h1v1h-1zM656 342h1v1h-1zM657 341h1v1h-1zM658 340h1v1h-1zM659 339h1v1h-1zM660 338h1v1h-1zM661 337h1v1h-1zM662 336h1v1h-1zM669 329h1v1h-1zM670 328h1v1h-1zM671 327h1v1h-1zM672 326h1v1h-1zM673 325h1v1h-1zM674 324h1v1h-1zM675 323h1v1h-1zM676 322h1v1h-1zM677 321h1v1h-1zM678 320h1v1h-1zM679 319h1v1h-1zM680 318h1v1h-1zM681 317h1v1h-1zM682 316h1v1h-1zM683 315h1v1h-1zM684 315h1v1h-1zM685 314h1v1h-1zM686 313h1v1h-1zM693 306h1v1h-1zM694 305h1v1h-1zM695 304h1v1h-1zM696 303h1v1h-1zM697 302h1v1h-1zM698 301h1v1h-1zM699 300h1v1h-1zM700 299h1v1h-1zM701 298h1v1h-1zM702 297h1v1h-1zM703 296h1v1h-1zM704 295h1v1h-1zM705 294h1v1h-1zM706 293h1v1h-1zM707 292h1v1h-1zM708 291h1v1h-1zM709 290h1v1h-1zM710 289h1v1h-1zM717 282h1v1h-1zM718 281h1v1h-1zM719 280h1v1h-1zM720 279h1v1h-1zM721 278h1v1h-1zM722 277h1v1h-1zM723 276h1v1h-1zM724 275h1v1h-1zM725 274h1v1h-1zM726 273h1v1h-1zM727 272h1v1h-1zM728 271h1v1h-1zM729 270h1v1h-1zM730 269h1v1h-1zM731 268h1v1h-1zM732 267h1v1h-1zM733 266h1v1h-1zM734 265h1v1h-1zM741 258h1v1h-1zM742 257h1v1h-1zM743 256h1v1h-1zM744 255h1v1h-1zM745 254h1v1h-1zM746 253h1v1h-1zM747 252h1v1h-1zM748 251h1v1h-1zM749 250h1v1h-1zM750 249h1v1h-1zM751 248h1v1h-1zM752 247h1v1h-1zM753 246h1v1h-1zM754 245h1v1h-1zM755 244h1v1h-1zM756 243h1v1h-1zM757 242h1v1h-1zM758 241h1v1h-1zM765 235h1v1h-1zM766 234h1v1h-1zM767 233h1v1h-1zM768 232h1v1h-1zM769 231h1v1h-1zM770 230h1v1h-1zM771 229h1v1h-1zM772 228h1v1h-1zM773 227h1v1h-1zM774 226h1v1h-1zM775 225h1v1h-1zM776 224h1v1h-1zM777 223h1v1h-1zM778 222h1v1h-1zM779 221h1v1h-1zM780 220h1v1h-1zM781 219h1v1h-1zM782 218h1v1h-1zM789 211h1v1h-1zM790 210h1v1h-1zM791 209h1v1h-1zM792 208h1v1h-1zM793 207h1v1h-1zM794 206h1v1h-1zM795 205h1v1h-1zM796 204h1v1h-1zM797 203h1v1h-1zM798 202h1v1h-1zM799 201h1v1h-1zM800 200h1v1h-1zM801 199h1v1h-1zM802 198h1v1h-1zM803 197h1v1h-1zM804 196h1v1h-1zM805 195h1v1h-1zM806 194h1v1h-1zM813 187h1v1h-1zM814 186h1v1h-1zM815 185h1v1h-1zM816 184h1v1h-1zM817 183h1v1h-1zM818 182h1v1h-1zM819 181h1v1h-1zM820 180h1v1h-1zM821 179h1v1h-1zM822 178h1v1h-1zM823 177h1v1h-1zM824 176h1v1h-1zM825 175h1v1h-1zM826 174h1v1h-1zM827 173h1v1h-1zM828 172h1v1h-1zM829 171h1v1h-1zM830 170h1v1h-1zM837 163h1v1h-1zM838 162h1v1h-1zM839 161h1v1h-1zM840 160h1v1h-1zM841 159h1v1h-1zM842 158h1v1h-1zM843 158h1v1h-1zM844 157h1v1h-1zM845 156h1v1h-1zM846 155h1v1h-1zM847 154h1v1h-1zM848 153h1v1h-1zM849 152h1v1h-1zM850 151h1v1h-1zM851 150h1v1h-1zM852 149h1v1h-1zM853 148h1v1h-1zM854 147h1v1h-1zM861 140h1v1h-1zM862 139h1v1h-1zM863 138h1v1h-1zM864 137h1v1h-1zM865 136h1v1h-1zM866 135h1v1h-1zM867 134h1v1h-1zM868 133h1v1h-1zM869 132h1v1h-1zM870 131h1v1h-1zM871 130h1v1h-1zM872 129h1v1h-1zM873 128h1v1h-1zM874 127h1v1h-1zM875 126h1v1h-1zM876 125h1v1h-1zM877 124h1v1h-1zM878 123h1v1h-1zM885 116h1v1h-1zM886 115h1v1h-1zM887 114h1v1h-1zM888 113h1v1h-1zM889 112h1v1h-1zM890 111h1v1h-1zM891 110h1v1h-1zM892 109h1v1h-1zM893 108h1v1h-1zM894 107h1v1h-1zM895 106h1v1h-1zM896 105h1v1h-1zM897 104h1v1h-1zM898 103h1v1h-1zM899 102h1v1h-1zM900 101h1v1h-1zM901 100h1v1h-1zM902 99h1v1h-1zM909 92h1v1h-1zM910 91h1v1h-1zM911 90h1v1h-1zM912 89h1v1h-1zM913 88h1v1h-1zM914 87h1v1h-1zM915 86h1v1h-1zM916 85h1v1h-1zM917 84h1v1h-1zM918 83h1v1h-1zM919 82h1v1h-1zM920 81h1v1h-1zM921 80h1v1h-1zM922 80h1v1h-1zM923 79h1v1h-1z" fill="#00ecf8" shape-rendering="crispEdges"/>
  <!-- blue region rect -->
  <g shape-rendering="crispEdges">
    <path d="M601.5,147.5 H804.5 V417.5 H601.5 Z" fill="none" stroke="#0000ff" stroke-width="1"/>
    <g fill="none" stroke="#800000" stroke-width="2">
      <rect x="599" y="145" width="6" height="6"/><rect x="802" y="145" width="6" height="6"/>
      <rect x="599" y="415" width="6" height="6"/><rect x="802" y="415" width="6" height="6"/>
    </g>
    <g fill="#ff00ff"><rect x="601" y="147" width="2" height="2"/><rect x="804" y="147" width="2" height="2"/><rect x="601" y="417" width="2" height="2"/><rect x="804" y="417" width="2" height="2"/></g>
  </g>
  <!-- axes -->
  <g stroke="#ffff00" stroke-width="1" fill="none" shape-rendering="crispEdges">
    <path d="M568.5,106 V259.5 H876"/>
    <path d="M563,106.5H568 M563,136.5H568 M563,167.5H568 M563,198.5H568 M563,228.5H568 M563,259.5H568"/>
    <path d="M568.5,259V264 M644.5,259V264 M721.5,259V264 M798.5,259V264 M875.5,259V264"/>
  </g>
  <g fill="#f4f40a" stroke="#f4f40a" stroke-width="0.3" font-family="Liberation Sans" font-size="10" letter-spacing="-0.5">
    <text x="536" y="110">126,0</text><text x="536" y="140">124,0</text><text x="536" y="171">122,0</text>
    <text x="536" y="202">120,0</text><text x="536" y="233">118,0</text><text x="536" y="263">116,0</text>
    <text x="561" y="279">0,0</text><text x="712" y="279">10,0</text><text x="866" y="279">20,0</text>
  </g>
  <g fill="#ffff00" font-family="Liberation Sans" font-size="11" letter-spacing="-0.2">
    <text x="537.5" y="94">Height-Value</text>
    <text x="853.5" y="292">Region-X</text>
  </g>
  <!-- hatch -->
  <g shape-rendering="crispEdges">
    <path d="M637.5,235.4V236.4M640.5,232.7V239.5M642.5,230.9V241.6M645.5,228.4V244.7M647.5,226.8V246.8M650.5,224.5V249.9M652.5,223.0V252.0M655.5,221.0V255.1M657.5,219.7V257.2M660.5,217.8V260.3M662.5,216.7V262.4M665.5,215.1V265.5M667.5,214.1V267.6M670.5,212.7V270.7M672.5,211.9V272.8M675.5,210.7V276.0M677.5,210.0V278.0M680.5,209.1V281.2M682.5,208.6V283.2M685.5,207.9V286.4M687.5,207.5V288.4M690.5,207.1V291.6M692.5,206.8V293.7M695.5,206.6V296.8M697.5,206.5V298.9M700.5,206.5V298.7M702.5,206.6V296.7M705.5,206.8V293.8M707.5,207.0V291.8M710.5,207.4V288.8M712.5,207.8V286.9M715.5,208.4V283.9M717.5,208.9V281.9M720.5,209.7V279.0M722.5,210.4V277.0M725.5,211.4V274.0M727.5,212.2V272.1M730.5,213.4V269.1M732.5,214.3V267.1M735.5,215.8V264.2M737.5,216.9V262.2M740.5,218.5V259.2M742.5,219.7V257.2M745.5,221.6V254.3M747.5,222.9V252.3M750.5,225.0V249.3M752.5,226.5V247.4M755.5,228.8V244.4M757.5,230.4V242.4M760.5,232.9V239.5M762.5,234.7V237.5" stroke="#008000" stroke-width="1" fill="none"/>
    <polyline points="637.0,235.9 639.1,233.9 641.2,232.0 643.4,230.2 645.5,228.4 647.6,226.7 649.7,225.1 651.8,223.5 653.9,222.0 656.0,220.6 658.2,219.2 660.3,218.0 662.4,216.7 664.5,215.6 666.6,214.5 668.8,213.5 670.9,212.5 673.0,211.7 675.1,210.9 677.2,210.1 679.3,209.5 681.5,208.9 683.6,208.3 685.7,207.9 687.8,207.5 689.9,207.1 692.0,206.9 694.1,206.7 696.3,206.6 698.4,206.5 700.5,206.5 702.6,206.6 704.7,206.7 706.9,206.9 709.0,207.2 711.1,207.5 713.2,207.9 715.3,208.4 717.4,208.9 719.5,209.5 721.7,210.1 723.8,210.8 725.9,211.6 728.0,212.4 730.1,213.3 732.2,214.2 734.4,215.2 736.5,216.3 738.6,217.5 740.7,218.7 742.8,219.9 745.0,221.2 747.1,222.6 749.2,224.1 751.3,225.6 753.4,227.2 755.5,228.8 757.6,230.5 759.8,232.3 761.9,234.1 764.0,236.0" fill="none" stroke="#008000" stroke-width="1.2"/>
    <path d="M636,236.3 L698.9,302.1 L765,236.5" fill="none" stroke="#ff8000" stroke-width="3"/>
    <path d="M637,236.9 L698.9,301.6 L764,237.0" fill="none" stroke="#008000" stroke-width="1"/>
  </g>
  <g fill="#ffffff" shape-rendering="crispEdges"><rect x="642" y="228" width="1" height="1"/><rect x="647" y="224" width="1" height="1"/><rect x="651" y="220" width="1" height="1"/><rect x="749" y="222" width="1" height="1"/><rect x="753" y="226" width="1" height="1"/><rect x="758" y="231" width="1" height="1"/></g>
  <!-- orange segments -->
  <g stroke="#ff8000" stroke-width="3.2" fill="none">
    <path d="M568,164.55 L634,233.25"/>
    <path d="M766,234.54 L850,151.60"/>
  </g>
  <!-- crosses -->
  <g stroke="#00ff00" stroke-width="3" shape-rendering="crispEdges">
    <path d="M630,232.5H642 M635.5,226.5V239"/>
    <path d="M693,206.5H705 M698.5,200.5V213"/>
    <path d="M759,233.5H771 M764.5,227.5V240"/>
  </g>
  <!-- rotation handle -->
  <path d="M803,286 Q800,283 802,281 Q805,278 808,281 Q809,284 806,286 L809,286" fill="none" stroke="#ff00ff" stroke-width="1.6"/>
</svg>
<!-- plot v-scrollbar -->
<div class="a" style="left:925px;top:79px;width:17px;height:447px;background:linear-gradient(90deg,#fff 0,#fff 1px,#e8e8e8 1px,#f0f0f0 45%,#f0f0f0 60%,#ececec)"></div>
<svg style="left:930px;top:86px" width="7" height="4" viewBox="0 0 7 4"><polygon points="0,4 3.5,0 7,4" fill="#505050"/></svg>
<svg style="left:930px;top:516px" width="7" height="4" viewBox="0 0 7 4"><polygon points="0,0 3.5,4 7,0" fill="#505050"/></svg>
<div class="a" style="left:926px;top:162px;width:15px;height:61px;border:1px solid #9a9a9a;border-radius:2px;background:linear-gradient(90deg,#f2f2f2,#e6e6e6 50%,#d6d6d6 51%,#cfcfcf)"></div>
<div class="a" style="left:930px;top:189px;width:7px;height:1px;background:#333"></div>
<div class="a" style="left:930px;top:192px;width:7px;height:1px;background:#333"></div>
<div class="a" style="left:930px;top:195px;width:7px;height:1px;background:#333"></div>
<!-- plot h-scrollbar -->
<div class="a" style="left:501px;top:526px;width:424px;height:17px;background:linear-gradient(#fff 0,#fff 1px,#e8e8e8 1px,#f0f0f0 45%,#f0f0f0 60%,#ececec)"></div>
<svg style="left:507px;top:531px" width="4" height="7" viewBox="0 0 4 7"><polygon points="4,0 0,3.5 4,7" fill="#505050"/></svg>
<svg style="left:915px;top:531px" width="4" height="7" viewBox="0 0 4 7"><polygon points="0,0 4,3.5 0,7" fill="#505050"/></svg>
<div class="a" style="left:649px;top:527px;width:128px;height:15px;border:1px solid #9a9a9a;border-radius:2px;background:linear-gradient(#f2f2f2,#e6e6e6 50%,#d6d6d6 51%,#cfcfcf)"></div>
<div class="a" style="left:709px;top:531px;width:1px;height:6px;background:#333"></div>
<div class="a" style="left:712px;top:531px;width:1px;height:6px;background:#333"></div>
<div class="a" style="left:715px;top:531px;width:1px;height:6px;background:#333"></div>
<div class="a" style="left:925px;top:526px;width:17px;height:17px;background:#f0f0f0"></div>


<!-- ===== status bar ===== -->
<div class="a" style="left:8px;top:542px;width:934px;height:1px;background:#fff"></div>
<div class="a" style="left:8px;top:543px;width:934px;height:1px;background:#a0a0a0"></div>
<div class="a" style="left:8px;top:544px;width:934px;height:16px;background:#efecea;border-top:1px solid #fff;border-bottom:1px solid #fff"></div>
<svg style="left:12px;top:547px" width="13" height="13" viewBox="0 0 13 13"><circle cx="6.2" cy="6.2" r="6" fill="#008a00"/><circle cx="5.6" cy="5.6" r="5.3" fill="#00ff00"/></svg>
<div class="a" style="left:25px;top:545px;width:1px;height:14px;background:#cfcdcb"></div>
<div class="a" style="left:83px;top:545px;width:1px;height:14px;background:#cfcdcb"></div>
<div class="a" style="left:141px;top:545px;width:1px;height:14px;background:#cfcdcb"></div>
<div class="a" style="left:237px;top:545px;width:1px;height:14px;background:#cfcdcb"></div>
<div class="a" style="left:924px;top:545px;width:1px;height:14px;background:#cfcdcb"></div>
<div class="t" style="left:36px;top:547px;letter-spacing:-0.5px">3,1947ms</div>
<div class="t" style="left:94px;top:547px;letter-spacing:-0.5px">51,551ms</div>
<svg style="left:929px;top:548px" width="11" height="11" viewBox="0 0 11 11" shape-rendering="crispEdges"><g fill="#b8b8b8"><rect x="8" y="1" width="2" height="2"/><rect x="5" y="4" width="2" height="2"/><rect x="8" y="4" width="2" height="2"/><rect x="2" y="7" width="2" height="2"/><rect x="5" y="7" width="2" height="2"/><rect x="8" y="7" width="2" height="2"/></g></svg>

</body></html>
